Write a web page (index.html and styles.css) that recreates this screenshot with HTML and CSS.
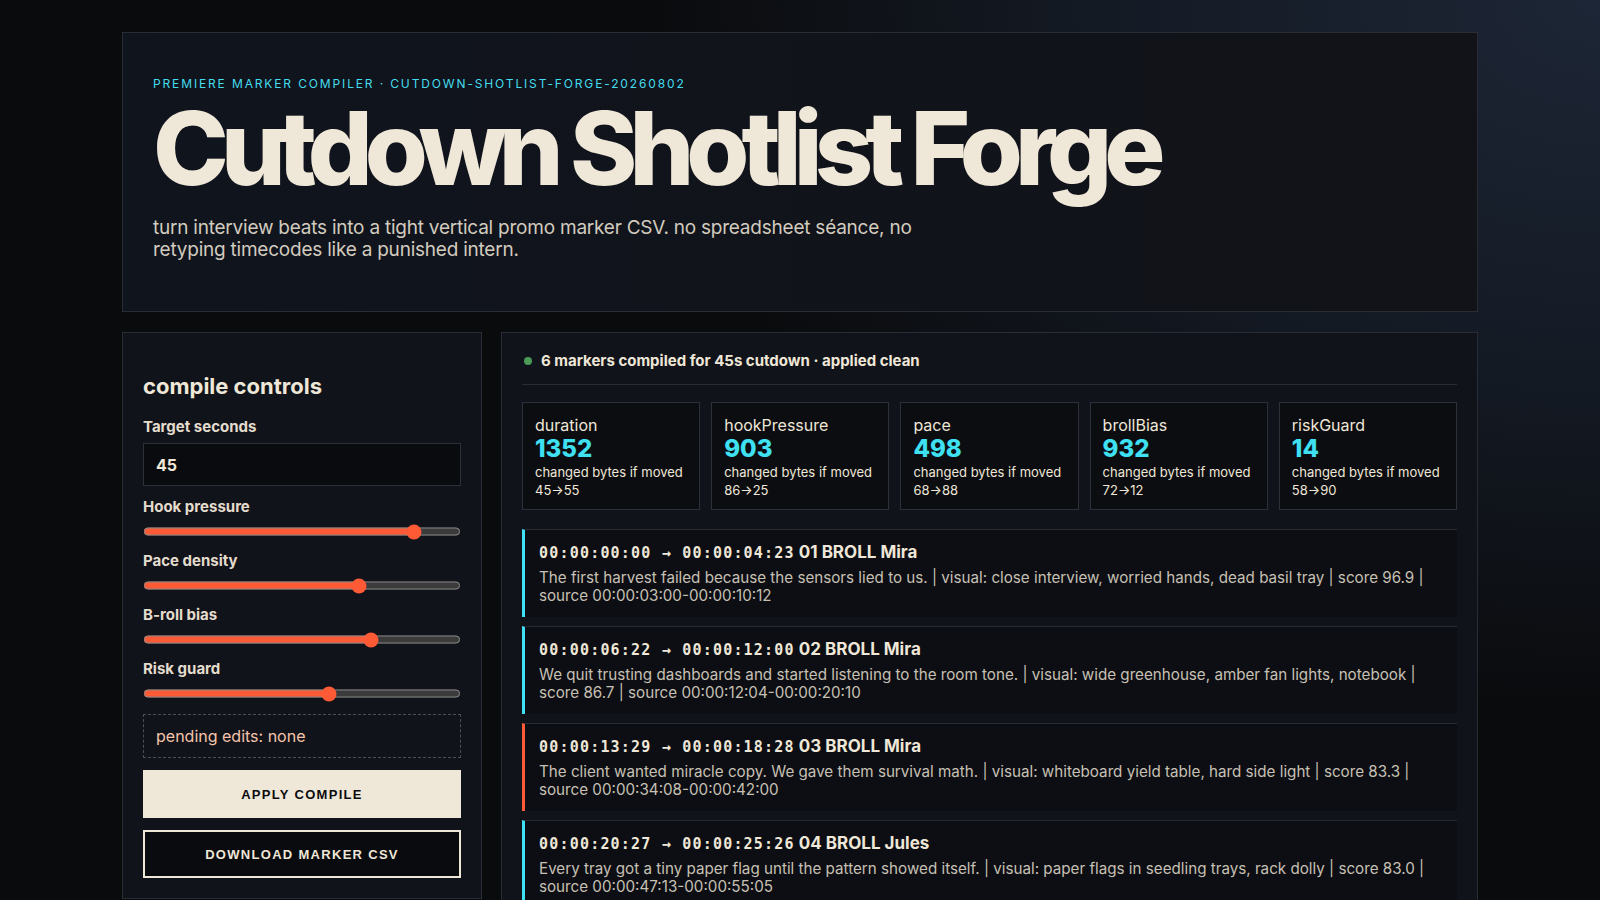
FILE: index.html
```html
<!DOCTYPE html>
<html lang="en">
<head>
    <meta charset="UTF-8">
    <meta name="viewport" content="width=device-width, initial-scale=1.0">
    <title>Cutdown Shotlist Forge</title>
    <link rel="stylesheet" href="styles.css">
</head>
<body>
    <div class="page">
        <!-- header -->
        <header class="hero">
            <p class="eyebrow">Premiere marker compiler · cutdown-shotlist-forge-20260802</p>
            <h1>Cutdown Shotlist Forge</h1>
            <p class="lede">turn interview beats into a tight vertical promo marker CSV. no spreadsheet séance, no retyping timecodes like a punished intern.</p>
        </header>

        <div class="workspace">
            <!-- controls -->
            <section class="panel controls">
                <h2>compile controls</h2>
                <label class="field">
                    <span>Target seconds</span>
                    <input type="text" class="num-input" value="45">
                </label>
                <label class="field">
                    <span>Hook pressure</span>
                    <input type="range" min="0" max="100" value="87">
                </label>
                <label class="field">
                    <span>Pace density</span>
                    <input type="range" min="0" max="100" value="69">
                </label>
                <label class="field">
                    <span>B-roll bias</span>
                    <input type="range" min="0" max="100" value="73">
                </label>
                <label class="field">
                    <span>Risk guard</span>
                    <input type="range" min="0" max="100" value="59">
                </label>
                <div class="pending">pending edits: none</div>
                <button class="btn btn-solid">Apply compile</button>
                <button class="btn btn-ghost">Download marker CSV</button>
            </section>

            <!-- output -->
            <section class="panel output">
                <div class="status"><span class="dot"></span>6 markers compiled for 45s cutdown · applied clean</div>

                <div class="metrics">
                    <div class="metric">
                        <div class="metric-name">duration</div>
                        <div class="metric-value">1352</div>
                        <div class="metric-note">changed bytes if moved</div>
                        <div class="metric-note">45→55</div>
                    </div>
                    <div class="metric">
                        <div class="metric-name">hookPressure</div>
                        <div class="metric-value">903</div>
                        <div class="metric-note">changed bytes if moved</div>
                        <div class="metric-note">86→25</div>
                    </div>
                    <div class="metric">
                        <div class="metric-name">pace</div>
                        <div class="metric-value">498</div>
                        <div class="metric-note">changed bytes if moved</div>
                        <div class="metric-note">68→88</div>
                    </div>
                    <div class="metric">
                        <div class="metric-name">brollBias</div>
                        <div class="metric-value">932</div>
                        <div class="metric-note">changed bytes if moved</div>
                        <div class="metric-note">72→12</div>
                    </div>
                    <div class="metric">
                        <div class="metric-name">riskGuard</div>
                        <div class="metric-value">14</div>
                        <div class="metric-note">changed bytes if moved</div>
                        <div class="metric-note">58→90</div>
                    </div>
                </div>

                <div class="markers">
                    <article class="marker">
                        <div class="marker-head"><span class="tc">00:00:00:00 → 00:00:04:23</span> 01 BROLL Mira</div>
                        <p>The first harvest failed because the sensors lied to us. | visual: close interview, worried hands, dead basil tray | score 96.9 | source 00:00:03:00-00:00:10:12</p>
                    </article>
                    <article class="marker">
                        <div class="marker-head"><span class="tc">00:00:06:22 → 00:00:12:00</span> 02 BROLL Mira</div>
                        <p>We quit trusting dashboards and started listening to the room tone. | visual: wide greenhouse, amber fan lights, notebook | score 86.7 | source 00:00:12:04-00:00:20:10</p>
                    </article>
                    <article class="marker risky">
                        <div class="marker-head"><span class="tc">00:00:13:29 → 00:00:18:28</span> 03 BROLL Mira</div>
                        <p>The client wanted miracle copy. We gave them survival math. | visual: whiteboard yield table, hard side light | score 83.3 | source 00:00:34:08-00:00:42:00</p>
                    </article>
                    <article class="marker">
                        <div class="marker-head"><span class="tc">00:00:20:27 → 00:00:25:26</span> 04 BROLL Jules</div>
                        <p>Every tray got a tiny paper flag until the pattern showed itself. | visual: paper flags in seedling trays, rack dolly | score 83.0 | source 00:00:47:13-00:00:55:05</p>
                    </article>
                </div>
            </section>
        </div>
    </div>
</body>
</html>
```

FILE: styles.css
```css
* { margin: 0; padding: 0; box-sizing: border-box; }
body {
    min-height: 100vh;
    font-family: Inter, "Noto Sans", sans-serif;
    color: #efe7d8;
    background: radial-gradient(ellipse 70% 90% at 100% 0%, #1d2636 0%, #141a24 45%, #0a0b0d 85%);
    background-color: #0a0b0d;
}
.page { max-width: 1356px; margin: 32px auto 0; }

/* header */
.hero {
    padding: 44px 30px 50px;
    background: linear-gradient(90deg, #10141d, #111318);
    border: 1px solid #272c35;
}
.eyebrow {
    font-size: 12px;
    line-height: 14px;
    letter-spacing: 0.155em;
    text-transform: uppercase;
    color: #44dcee;
}
.hero h1 {
    margin-top: 6px;
    font-size: 102px;
    line-height: 1;
    font-weight: 800;
    letter-spacing: -0.078em;
    color: #efe7d8;
}
.lede {
    margin-top: 18px;
    max-width: 760px;
    font-size: 19px;
    line-height: 22px;
    letter-spacing: -0.012em;
    color: #d2cbbf;
}

/* two columns */
.workspace {
    display: grid;
    grid-template-columns: 360px 1fr;
    gap: 19px;
    margin-top: 20px;
    align-items: start;
}
.panel {
    background: #10131a;
    border: 1px solid #272c35;
    padding: 20px;
}

/* controls */
.controls { display: flex; flex-direction: column; gap: 12px; }
.controls h2 {
    margin: 20px 0 7px;
    font-size: 22px;
    line-height: 26px;
    font-weight: 700;
}
.field { display: flex; flex-direction: column; gap: 7px; }
.field span { font-size: 15px; line-height: 18px; font-weight: 700; color: #e4dccd; }
.num-input {
    height: 43px;
    padding: 0 12px;
    background: #0a0b0e;
    border: 1px solid #2b303a;
    color: #efe7d8;
    font: 700 16px Inter, sans-serif;
    outline: none;
}
.field input[type=range] {
    width: 100%;
    height: 17px;
    margin: 0;
    accent-color: #ff5a36;
}
.pending {
    height: 44px;
    padding: 0 12px;
    display: flex;
    align-items: center;
    border: 1px dashed #4a4f58;
    font-size: 16px;
    color: #f6c4aa;
}
.btn {
    height: 48px;
    font: 700 13px "Liberation Sans", Arial, sans-serif;
    letter-spacing: 0.1em;
    text-transform: uppercase;
    cursor: pointer;
}
.btn-solid { background: #efe7d8; color: #0a0b0e; border: none; }
.btn-ghost { background: #0a0b0e; color: #efe7d8; border: 2px solid #efe7d8; }

/* output */
.status {
    display: flex;
    align-items: center;
    gap: 9px;
    padding: 0 0 15px 2px;
    border-bottom: 1px solid #272c35;
    font-size: 15px;
    line-height: 16px;
    font-weight: 700;
}
.dot { width: 8px; height: 8px; border-radius: 50%; background: #4b9a57; }

.metrics {
    display: grid;
    grid-template-columns: repeat(5, 1fr);
    gap: 11px;
    margin-top: 17px;
}
.metric {
    padding: 12px 12px 10px;
    background: #0b0d11;
    border: 1px solid #2b303a;
}
.metric-name { font-size: 16px; line-height: 20px; }
.metric-value { font-size: 24px; line-height: 28px; font-weight: 800; color: #3fe0f2; }
.metric-note { font-size: 13px; line-height: 18px; }

.markers { display: flex; flex-direction: column; gap: 9px; margin-top: 19px; }
.marker {
    padding: 12px 14px 12px;
    background: #0c0e13;
    border-top: 1px solid #262b34;
    border-left: 3px solid #3fe0f2;
}
.marker.risky { border-left-color: #ff5a36; }
.marker-head { font-size: 17px; line-height: 20px; font-weight: 700; }
.tc { font-family: "DejaVu Sans Mono", monospace; font-size: 15px; letter-spacing: 0.08em; }
.marker p { margin-top: 6px; font-size: 15.2px; line-height: 18px; color: #c7c0b4; }
```
